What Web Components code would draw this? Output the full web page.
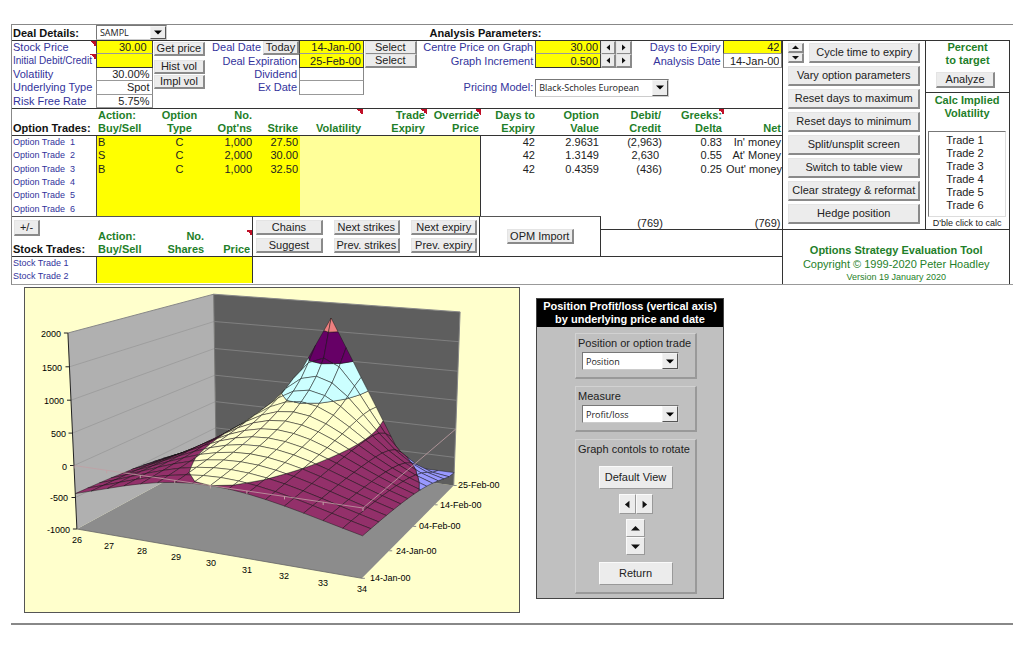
<!DOCTYPE html>
<html lang="en">
<head>
<meta charset="utf-8">
<title>Options Strategy Evaluation Tool</title>
<style>
  body { margin: 0; background: #fff; color: #222; font: 11px/13px "Liberation Sans", Arial, sans-serif; }
</style>
</head>
<body>
<strategy-workbook></strategy-workbook>

<script>
const BASE = `
  * { box-sizing: border-box; }
  :host { box-sizing: border-box; }
  input, select, button { font: inherit; color: inherit; margin: 0; }
  .title { font-weight: bold; color: #111; }
`;

function define(name, html, init) {
  const template = document.createElement('template');
  template.innerHTML = html;
  customElements.define(name, class extends HTMLElement {
    constructor() {
      super();
      this.attachShadow({ mode: 'open' }).append(template.content.cloneNode(true));
    }
    connectedCallback() { if (init) init(this, this.shadowRoot); }
  });
}

/* Raised grey push button */
define('push-button', `
  <style>${BASE}
    :host { display: block; height: 14px; min-width: 0; }
    button { display: flex; align-items: center; justify-content: center; width: 100%; height: 100%;
      padding: 0; white-space: nowrap; background: #ececec; color: #222;
      border: 1px solid #e4e4e4; border-right: 2px solid #8a8a8a; border-bottom: 2px solid #8a8a8a; }
    :host([flat]) button { border-width: 1px; border-color: #fafafa #999 #999 #fafafa; }
  </style>
  <button type="button"><slot></slot></button>`,
  (host, root) => {
    if (host.hasAttribute('label')) root.querySelector('button').setAttribute('aria-label', host.getAttribute('label'));
  });

/* Small solid arrow head */
define('arrow-head', `
  <style>:host { display: block; } svg { display: block; width: var(--arrow, 7px); height: var(--arrow, 7px); }</style>
  <svg viewBox="0 0 7 7"><path fill="#111"/></svg>`,
  (host, root) => {
    const shapes = { left: 'M5 0.5V6.5L1.5 3.5z', right: 'M2 0.5V6.5L5.5 3.5z', up: 'M0 5H7L3.5 1.5z', down: 'M0 2H7L3.5 5.5z' };
    root.querySelector('path').setAttribute('d', shapes[host.getAttribute('dir')]);
  });

/* Label with a drop-down list */
define('combo-box', `
  <style>${BASE}
    :host { display: contents; }
    .box { display: grid; grid-template-columns: minmax(0, 1fr) 16px; align-items: center; height: var(--combo-height, 18px);
      background: #fff; border: 1px solid #777; border-right-color: #ccc; border-bottom-color: #ccc; }
    select { grid-area: 1 / 1 / 2 / 3; width: 100%; height: 100%; appearance: none; border: 0; background: none;
      padding: 0 16px 0 3px; font: 9px/13px "Open Sans", "Noto Sans", sans-serif; color: #222; }
    .drop { grid-area: 1 / 2 / 2 / 3; display: grid; place-items: center; height: 100%; pointer-events: none;
      background: #ececec; border: 1px solid #f4f4f4; border-right-color: #555; border-bottom-color: #555; }
  </style>
  <label part="label" for="list"><slot></slot></label>
  <span class="box" part="box">
    <select id="list"><option></option></select>
    <span class="drop"><svg width="8" height="5" viewBox="0 0 8 5"><path d="M0 0.5H8L4 4.5z" fill="#000"/></svg></span>
  </span>`,
  (host, root) => { root.querySelector('option').textContent = host.getAttribute('value'); });

define('deal-header', `
  <style>${BASE}
    :host { display: grid; grid-template-columns: minmax(0, 84fr) minmax(0, 71fr) minmax(0, 263fr) minmax(0, 581fr);
      height: 16px; align-items: center; border-bottom: 1px solid #333; --combo-height: 15px; }
    combo-box::part(label) { font-weight: bold; color: #111; padding-left: 1px; padding-top: 2px; white-space: nowrap; }
    .title { grid-column: 4; padding-top: 2px; }
  </style>
  <combo-box value="SAMPL">Deal Details:</combo-box>
  <span class="title">Analysis Parameters:</span>`);

define('deal-inputs', `
  <style>${BASE}
    :host { display: grid; height: 68px; border-bottom: 1px solid #333; grid-template-rows: repeat(5, minmax(0, 1fr));
      grid-template-columns: minmax(0, 84fr) minmax(0, 57fr) minmax(0, 55fr) minmax(0, 92fr) minmax(0, 65fr) minmax(0, 54fr)
        minmax(0, 118fr) minmax(0, 66fr) minmax(0, 32fr) minmax(0, 90fr) minmax(0, 60fr); }
    label, combo-box::part(label) { color: #33339c; white-space: nowrap; padding: 0 2px 0 1px; align-self: center; }
    .r, combo-box::part(label) { text-align: right; }
    .note { background: linear-gradient(to top right, transparent 50%, #c01028 50%) top right / 6px 6px no-repeat; align-self: stretch; }
    .long { font-size: 10px; }
    input { width: 100%; height: 100%; min-width: 0; text-align: right; padding: 0 2px; border: 0; outline: 0; border-radius: 0;
      background: #fff; border-bottom: 1px solid #999; border-right: 1px solid #888; border-left: 1px solid #888; }
    input.hot { background: #ff0; border-left-color: #444; border-right-color: #444; }
    #price { padding-right: 5px; }
    input.end { border-bottom-color: #333; }
    .a1 { grid-column: 1; } .a2 { grid-column: 2; } .b1 { grid-column: 4; } .b2 { grid-column: 5; } .b3 { grid-column: 6; }
    .c1 { grid-column: 7; } .c2 { grid-column: 8; } .c3 { grid-column: 9; } .d1 { grid-column: 10; } .d2 { grid-column: 11; }
    .r1 { grid-row: 1; } .r2 { grid-row: 2; } .r3 { grid-row: 3; } .r4 { grid-row: 4; } .r5 { grid-row: 5; }
    .tools { grid-area: 1 / 3 / 6 / 4; padding: 1px 2px 0 1px; display: grid; align-content: start; row-gap: 1px; }
    .tools push-button:first-child { margin-bottom: 3px; }
    .today { display: flex; align-items: center; justify-content: flex-end; }
    .today push-button { width: 36px; }
    .b3 { margin: 0 1px; align-self: center; }
    .spin { display: grid; grid-template-columns: 1fr 1fr; align-items: center; padding-right: 1px; }
    combo-box::part(label) { grid-area: 4 / 7; }
    combo-box::part(box) { grid-area: 4 / 8 / 5 / 11; width: 134px; align-self: center; }
  </style>
  <label class="a1 r1 note" for="price">Stock Price</label><input class="a2 r1 hot" id="price" value="30.00">
  <label class="a1 r2 note long" for="debit">Initial Debit/Credit</label><input class="a2 r2 hot end" id="debit">
  <label class="a1 r3" for="vol">Volatility</label><input class="a2 r3" id="vol" value="30.00%">
  <label class="a1 r4" for="under">Underlying Type</label><input class="a2 r4" id="under" value="Spot">
  <label class="a1 r5" for="rate">Risk Free Rate</label><input class="a2 r5" id="rate" value="5.75%">
  <div class="tools"><push-button>Get price</push-button><push-button>Hist vol</push-button><push-button>Impl vol</push-button></div>

  <div class="b1 r1 today"><label for="date">Deal Date</label><push-button>Today</push-button></div>
  <input class="b2 r1 hot" id="date" value="14-Jan-00"><push-button class="b3 r1">Select</push-button>
  <label class="b1 r2 r" for="exp">Deal Expiration</label>
  <input class="b2 r2 hot end" id="exp" value="25-Feb-00"><push-button class="b3 r2">Select</push-button>
  <label class="b1 r3 r" for="div">Dividend</label><input class="b2 r3" id="div">
  <label class="b1 r4 r" for="exd">Ex Date</label><input class="b2 r4" id="exd">

  <label class="c1 r1 r" for="centre">Centre Price on Graph</label><input class="c2 r1 hot" id="centre" value="30.00">
  <div class="c3 r1 spin"><push-button label="Lower centre price"><arrow-head dir="left"></arrow-head></push-button><push-button label="Raise centre price"><arrow-head dir="right"></arrow-head></push-button></div>
  <label class="c1 r2 r" for="inc">Graph Increment</label><input class="c2 r2 hot end" id="inc" value="0.500">
  <div class="c3 r2 spin"><push-button label="Lower increment"><arrow-head dir="left"></arrow-head></push-button><push-button label="Raise increment"><arrow-head dir="right"></arrow-head></push-button></div>
  <combo-box value="Black-Scholes European">Pricing Model:</combo-box>
  <label class="d1 r1 r" for="days">Days to Expiry</label><input class="d2 r1 hot" id="days" value="42">
  <label class="d1 r2 r" for="adate">Analysis Date</label><input class="d2 r2" id="adate" value="14-Jan-00">`);

const TABLE = `
    table { width: 100%; border-collapse: separate; border-spacing: 0; table-layout: fixed; }
    th, td { padding: 0 2px; text-align: right; font-weight: normal; white-space: nowrap; vertical-align: middle; }
    thead th { color: #1f7f2a; font-weight: bold; vertical-align: bottom; border-bottom: 1px solid #333; }
    thead th:first-child { color: #111; }
    th:first-child, th:nth-child(2), td:nth-child(2) { text-align: left; }
    th:first-child { padding-left: 1px; }
    tbody th { color: #33339c; font-size: 9px; white-space: pre; }
    .hot { background: #ff0; }
    .hot.first { border-left: 1px solid #444; padding-left: 1px; }
    .note { background: linear-gradient(to top right, transparent 50%, #c01028 50%) top right / 6px 6px no-repeat; }
`;

define('option-trades', `
  <style>${BASE}${TABLE}
    :host { display: block; }
    table { height: 107px; }
    .c, th.c { text-align: center; }
    .pale { background: #ff9; }
    .last { border-right: 1px solid #333; }
    .val { padding-right: 3px; }
    .neg { padding-right: 3px; }
    .pos { padding-right: 6px; }
    thead th.neg { padding-right: 4px; }
  </style>
  <table>
    <colgroup></colgroup>
    <thead><tr>
      <th scope="col">Option Trades:</th><th scope="col">Action:<br>Buy/Sell</th><th scope="col" class="c">Option<br>Type</th>
      <th scope="col">No.<br>Opt'ns</th><th scope="col">Strike</th><th scope="col" class="note">Volatility</th>
      <th scope="col" class="note">Trade<br>Expiry</th><th scope="col" class="note">Override<br>Price</th>
      <th scope="col">Days to<br>Expiry</th><th scope="col" class="val">Option<br>Value</th><th scope="col" class="neg">Debit/<br>Credit</th>
      <th scope="col" class="note">Greeks:<br>Delta</th><th scope="col">Net</th>
    </tr></thead>
    <tbody></tbody>
  </table>`,
  (host, root) => {
    const widths = [84, 57, 53, 48, 46, 63, 64, 54, 56, 65, 63, 59, 59];
    root.querySelector('colgroup').innerHTML = widths.map(w => `<col style="width:${w}px">`).join('');
    const trades = [
      ['B', 'C', '1,000', '27.50', '42', '2.9631', '(2,963)', '0.83', "In' money"],
      ['S', 'C', '2,000', '30.00', '42', '1.3149', '2,630', '0.55', "At' Money"],
      ['B', 'C', '1,000', '32.50', '42', '0.4359', '(436)', '0.25', "Out' money"],
      [], [], []
    ];
    root.querySelector('tbody').innerHTML = trades.map((t, i) => {
      const v = n => t[n] || '';
      return `<tr><th scope="row">Option Trade  ${i + 1}</th><td class="hot first">${v(0)}</td><td class="hot c">${v(1)}</td>
        <td class="hot">${v(2)}</td><td class="hot">${v(3)}</td><td class="pale"></td><td class="pale"></td><td class="pale last"></td>
        <td>${v(4)}</td><td class="val">${v(5)}</td><td class="${v(6).startsWith('(') ? 'neg' : 'pos'}">${v(6)}</td><td>${v(7)}</td><td>${v(8)}</td></tr>`;
    }).join('');
  });

define('stock-trades', `
  <style>${BASE}${TABLE}
    :host { display: block; min-width: 0; border-top: 1px solid #555; border-right: 1px solid #333; }
    table { height: 66px; }
    thead th { height: 40px; }
    push-button { width: 26px; height: 16px; margin: 0 0 7px 1px; font-weight: normal; }
    .note { background-position: right 13px; }
    tbody th { height: 13px; }
  </style>
  <table>
    <colgroup><col style="width:84px"><col style="width:60px"><col style="width:50px"><col style="width:46px"></colgroup>
    <thead><tr><th scope="col"><push-button>+/-</push-button>Stock Trades:</th><th scope="col">Action:<br>Buy/Sell</th>
      <th scope="col">No.<br>Shares</th><th scope="col" class="note">Price</th></tr></thead>
    <tbody>
      <tr><th scope="row">Stock Trade 1</th><td class="hot first"></td><td class="hot"></td><td class="hot"></td></tr>
      <tr><th scope="row">Stock Trade 2</th><td class="hot first"></td><td class="hot"></td><td class="hot"></td></tr>
    </tbody>
  </table>`);

define('trade-strip', `
  <style>${BASE}
    :host { display: grid; grid-template-rows: 41px 26px;
      grid-template-columns: minmax(0, 242fr) minmax(0, 228fr) minmax(0, 121fr) minmax(0, 182fr); }
    stock-trades { grid-row: 1 / 3; }
    .cell { border-top: 1px solid #555; border-right: 1px solid #333; border-bottom: 1px solid #333; }
    .chains { display: grid; grid-template-columns: repeat(3, 1fr); gap: 3px 11px; padding: 3px 2px 0 3px; align-content: start; }
    .chains push-button { height: 15px; }
    .import { display: grid; place-items: center; }
    .import push-button { width: 67px; height: 15px; }
    .totals { border-bottom: 1px solid #333; }
    .sums { display: grid; grid-template-columns: 64fr 118fr; height: 14px; border-bottom: 1px solid #333; text-align: right; line-height: 14px; }
    .sums span { padding-right: 2px; }
  </style>
  <stock-trades></stock-trades>
  <div class="cell chains">
    <push-button>Chains</push-button><push-button>Next strikes</push-button><push-button>Next expiry</push-button>
    <push-button>Suggest</push-button><push-button>Prev. strikes</push-button><push-button>Prev. expiry</push-button>
  </div>
  <div class="cell import"><push-button>OPM Import</push-button></div>
  <div class="totals"><div class="sums"><span>(769)</span><span>(769)</span></div></div>`);

define('action-list', `
  <style>${BASE}
    :host { display: grid; grid-auto-rows: 20px; row-gap: 3px; align-content: start; padding: 2px 5px 0 5px; border-right: 1px solid #333; }
    push-button { height: 20px; }
    .cycle { display: grid; grid-template-columns: 16px minmax(0, 1fr); column-gap: 5px; }
    .step push-button { height: 10px; }
  </style>
  <div class="cycle">
    <div class="step"><push-button label="More days"><arrow-head dir="up"></arrow-head></push-button><push-button label="Fewer days"><arrow-head dir="down"></arrow-head></push-button></div>
    <push-button>Cycle time to expiry</push-button>
  </div>
  <push-button>Vary option parameters</push-button>
  <push-button>Reset days to maximum</push-button>
  <push-button>Reset days to minimum</push-button>
  <push-button>Split/unsplit screen</push-button>
  <push-button>Switch to table view</push-button>
  <push-button>Clear strategy &amp; reformat</push-button>
  <push-button>Hedge position</push-button>`);

define('implied-panel', `
  <style>${BASE}
    :host { display: flex; flex-direction: column; text-align: center; }
    .head { color: #1f7f2a; font-weight: bold; display: block; }
    .target { height: 53px; padding-top: 0; border-bottom: 1px solid #333; }
    .target push-button { width: 59px; height: 16px; margin: 5px auto 0 10px; }
    .calc { padding: 1px 3px 0 2px; flex: 1; }
    select { display: block; width: 100%; height: 86px; margin-top: 11px; padding: 2px 0 0; overflow: hidden;
      border: 1px solid #ddd; border-top-color: #777; border-left-color: #777; border-radius: 0; background: #fff; outline: 0; }
    option { height: 13px; min-height: 13px; padding: 0 0 0 17px; line-height: 13px; text-align: left; }
    small { display: block; font-size: 9px; line-height: 12px; }
  </style>
  <div class="target"><span class="head">Percent<br>to target</span><push-button>Analyze</push-button></div>
  <div class="calc">
    <label class="head" for="trades">Calc Implied<br>Volatility</label>
    <select id="trades" size="6"><option>Trade 1</option><option>Trade 2</option><option>Trade 3</option><option>Trade 4</option><option>Trade 5</option><option>Trade 6</option></select>
    <small>D'ble click to calc</small>
  </div>`);

define('product-credits', `
  <style>${BASE}
    :host { display: block; text-align: center; color: #1f7f2a; padding-top: 13px; border-top: 1px solid #333; }
    div { line-height: 14px; } small { display: block; font-size: 9px; line-height: 13px; }
  </style>
  <div><b>Options Strategy Evaluation Tool</b></div>
  <div>Copyright © 1999-2020 Peter Hoadley</div>
  <small>Version 19 January 2020</small>`);

/* Profit/loss surface of the butterfly, shaded in bands of 500 */
define('profit-surface', `
  <style>${BASE}
    :host { display: block; background: #ffc; border: 1px solid #555; }
    svg { display: block; width: 100%; height: auto; }
    text { font: 9px "Liberation Sans", Arial, sans-serif; fill: #000; }
  </style>
  <svg viewBox="25 287 494 324" role="img" aria-label="Profit and loss by price and date"></svg>`,
  (host, root) => {
    const project = (x, y, z) => {
      const w = 1 - 0.107 * x + 0.243 * y - 0.014 * z;
      return [(74 + 250.2 * x + 193.6 * y - 4 * z) / w, (464.5 - 11.75 * x + 33.5 * y - 70.9 * z) / w];
    };
    const cdf = d => {
      const t = 1 / (1 + 0.2316419 * Math.abs(d));
      const tail = 0.3989423 * Math.exp(-d * d / 2) * t * (0.3193815 + t * (-0.3565638 + t * (1.781478 + t * (-1.821256 + t * 1.330274))));
      return d > 0 ? 1 - tail : tail;
    };
    const call = (s, k, t) => {
      if (t <= 0) return Math.max(0, s - k);
      const v = 0.3 * Math.sqrt(t), d = (Math.log(s / k) + 0.0575 * t) / v + v / 2;
      return s * cdf(d) - k * Math.exp(-0.0575 * t) * cdf(d - v);
    };
    const profit = (x, y) => {
      const s = 26 + 8 * x, t = 42 / 365 * (1 - y);
      return call(s, 27.5, t) - 2 * call(s, 30, t) + call(s, 32.5, t) - 0.769;
    };
    const clip = (poly, level, keepAbove) => {
      const out = [], inside = p => keepAbove ? p[2] >= level : p[2] <= level;
      poly.forEach((a, i) => {
        const b = poly[(i + 1) % poly.length];
        if (inside(a)) out.push(a);
        if (inside(a) !== inside(b)) {
          const f = (level - a[2]) / (b[2] - a[2]);
          out.push(a.map((c, j) => c + f * (b[j] - c)));
        }
      });
      return out;
    };
    const path = pts => pts.map(p => project(...p).map(n => n.toFixed(1)).join()).join(' ');
    const face = (pts, fill, extra = '') => `<polygon points="${path(pts)}" fill="${fill}" ${extra}/>`;
    const line = (pts, stroke, width = 1) => `<polyline points="${path(pts)}" fill="none" stroke="${stroke}" stroke-width="${width}"/>`;

    let svg = face([[0,0,-1],[0,1,-1],[1,1,-1],[1,0,-1]], '#8c8c8c')
      + face([[0,0,-1],[0,0,2],[0,1,2],[0,1,-1]], '#b0b0b0')
      + face([[0,1,-1],[0,1,2],[1,1,2],[1,1,-1]], '#5e5e5e');
    for (let z = -0.5; z < 2; z += 0.5) svg += line([[0,0,z],[0,1,z]], '#999', 0.8) + line([[0,1,z],[1,1,z]], '#888', 0.8);
    svg += line([[0,0,2],[0,1,2],[1,1,2],[1,1,-1]], '#888') + line([[0,1,2],[0,1,-1]], '#777');

    const bands = [[-1, '#9999ff'], [-0.5, '#93306a'], [0, '#ffffcc'], [0.5, '#ccffff'], [1, '#660066'], [1.5, '#ee8080']];
    const nx = 16, ny = 14;
    for (let j = ny - 1; j >= 0; j--) for (let i = 0; i < nx; i++) {
      const quad = [[i, j], [i + 1, j], [i + 1, j + 1], [i, j + 1]].map(([a, b]) => [a / nx, b / ny, profit(a / nx, b / ny)]);
      bands.forEach(([lo, fill]) => {
        const piece = clip(clip(quad, lo, true), lo + 0.5, false);
        if (piece.length > 2) svg += face(piece, fill, 'stroke="#111" stroke-opacity=".75" stroke-width=".6" stroke-linejoin="round"');
      });
    }

    svg += line([[0,0,0],[1,0,0],[1,1,0]], '#c0a0a4', 0.8);
    svg += line([[0,0,-1],[0,0,2]], '#222') + line([[0,0,-1],[1,0,-1]], '#666', 0.8);
    const tick = (x, y, dx, dy, color) => `<path d="M${x.toFixed(1)} ${y.toFixed(1)}l${dx} ${dy}" stroke="${color}" stroke-width="1"/>`;
    const label = (x, y, anchor, t) => `<text x="${Math.round(x)}" y="${Math.round(y)}" text-anchor="${anchor}">${t}</text>`;
    for (let v = -1000; v <= 2000; v += 500) {
      const [x, y] = project(0, 0, v / 1000);
      svg += tick(x, y, -4, 0, '#222') + label(x - 7, y + 4, 'end', v);
    }
    for (let i = 0; i <= 8; i++) {
      const [x, y] = project(i / 8, 0, -1), [tx, ty] = project(i / 8, 0, 0);
      svg += tick(tx, ty, 0, 3, '#c0a0a4') + label(x, y + 14, 'middle', 26 + i);
    }
    ['14-Jan-00', '24-Jan-00', '04-Feb-00', '14-Feb-00', '25-Feb-00'].forEach((d, i) => {
      const [x, y] = project(1, i / 4, -1);
      svg += tick(x, y, 3, 0, '#888') + label(x + 8 - i, y + 3, 'start', d);
    });
    root.querySelector('svg').innerHTML = svg;
  });

define('control-group', `
  <style>${BASE}
    :host { display: block; border: 1px solid #d2d2d2; border-right: 2px solid #999; border-bottom: 2px solid #999; padding: 3px 2px 7px; }
  </style><slot></slot>`);

define('graph-controls', `
  <style>${BASE}
    :host { display: block; background: #c0c0c0; border: 1px solid #444; padding-bottom: 4px; --arrow: 9px; }
    h2 { margin: 0; background: #000; color: #fff; font-size: 11px; line-height: 13px; font-weight: bold; text-align: center; padding: 1px 0; white-space: nowrap; }
    .stack { display: grid; row-gap: 7px; width: 122px; margin: 6px auto 0 38px; }
    combo-box::part(label) { display: block; height: 15px; white-space: nowrap; }
    combo-box::part(box) { width: 97px; margin-left: 4px; }
    .rotate { display: grid; justify-items: center; margin-top: 1px; }
    .wide { width: 74px; height: 23px; margin-top: 9px; }
    .row { display: flex; margin-top: 5px; }
    .row push-button { width: 17px; height: 20px; }
    .col { margin: 5px 0 -2px; }
    .col push-button { width: 19px; height: 18px; }
  </style>
  <h2>Position Profit/loss (vertical axis)<br>by underlying price and date</h2>
  <div class="stack">
    <control-group><combo-box value="Position">Position or option trade</combo-box></control-group>
    <control-group><combo-box value="Profit/loss">Measure</combo-box></control-group>
    <control-group>
      <div>Graph contols to rotate</div>
      <div class="rotate">
        <push-button flat class="wide">Default View</push-button>
        <div class="row"><push-button flat label="Rotate left"><arrow-head dir="left"></arrow-head></push-button><push-button flat label="Rotate right"><arrow-head dir="right"></arrow-head></push-button></div>
        <div class="col"><push-button flat label="Tilt up"><arrow-head dir="up"></arrow-head></push-button><push-button flat label="Tilt down"><arrow-head dir="down"></arrow-head></push-button></div>
        <push-button flat class="wide">Return</push-button>
      </div>
    </control-group>
  </div>`);

define('strategy-workbook', `
  <style>${BASE}
    :host { display: block; padding: 24px 11px 0; }
    .sheet { border-top: 1px solid #888; border-bottom: 1px solid #999; border-left: 1px solid #888; padding-right: 3px; }
    .body { display: grid; grid-template-columns: minmax(0, 773fr) minmax(0, 226fr); border-right: 1px solid #333; }
    .main { border-right: 1px solid #333; }
    .side { display: grid; grid-template-columns: minmax(0, 143fr) minmax(0, 83fr); grid-template-rows: 188px 1fr; }
    product-credits { grid-column: 1 / 3; }
    .view { display: flex; align-items: flex-start; column-gap: 16px; padding: 2px 0 10px 13px; border-bottom: 2px solid #888; }
    profit-surface { flex: 0 1 496px; }
    graph-controls { flex: 0 0 188px; margin-top: 11px; }
  </style>
  <section class="sheet">
    <deal-header></deal-header>
    <div class="body">
      <div class="main"><deal-inputs></deal-inputs><option-trades></option-trades><trade-strip></trade-strip></div>
      <div class="side"><action-list></action-list><implied-panel></implied-panel><product-credits></product-credits></div>
    </div>
  </section>
  <section class="view"><profit-surface></profit-surface><graph-controls></graph-controls></section>`);
</script>
</body>
</html>
